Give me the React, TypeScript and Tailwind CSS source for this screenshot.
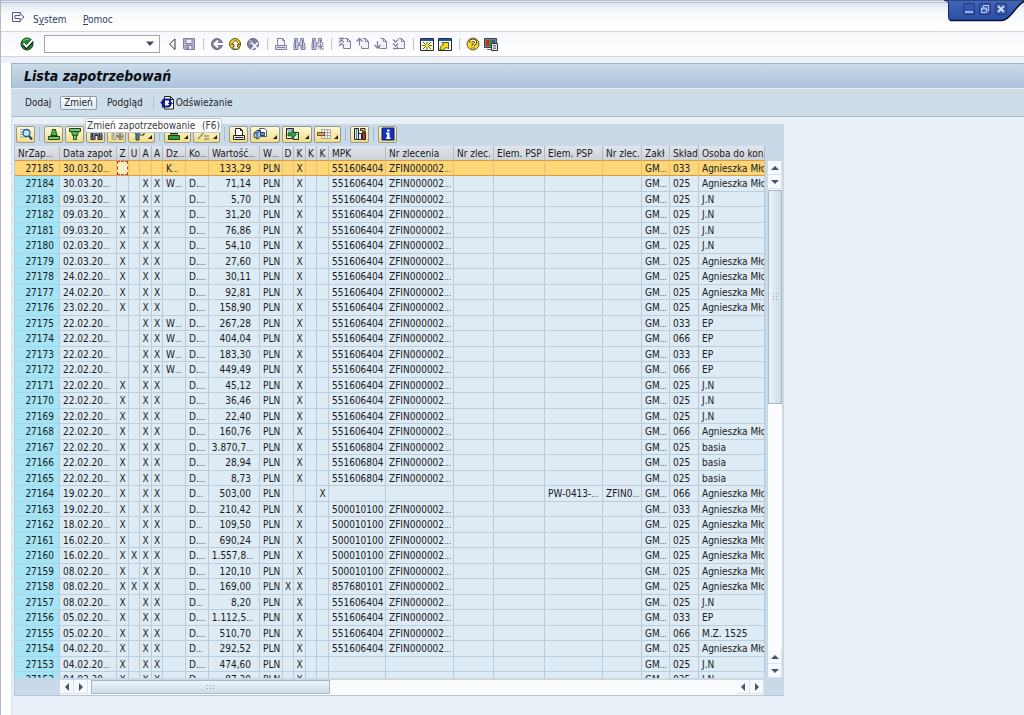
import type { ReactNode } from "react";

type Column = { label: string; width: string; cut?: boolean };

const columns: Column[] = [
  { label: "NrZap", width: "w-[45px]", cut: true },
  { label: "Data zapot", width: "w-[57px]" },
  { label: "Z", width: "w-[12px]" },
  { label: "U", width: "w-[11px]" },
  { label: "A", width: "w-[12px]" },
  { label: "A", width: "w-[11px]" },
  { label: "Dz", width: "w-[23px]", cut: true },
  { label: "Ko", width: "w-[23px]", cut: true },
  { label: "Wartość", width: "w-[51px]", cut: true },
  { label: "W", width: "w-[23px]", cut: true },
  { label: "D", width: "w-[11px]" },
  { label: "K", width: "w-[12px]" },
  { label: "K", width: "w-[11px]" },
  { label: "K", width: "w-[12px]" },
  { label: "MPK", width: "w-[57px]" },
  { label: "Nr zlecenia", width: "w-[68px]" },
  { label: "Nr zlec.", width: "w-[40px]" },
  { label: "Elem. PSP", width: "w-[51px]" },
  { label: "Elem. PSP", width: "w-[58px]" },
  { label: "Nr zlec.", width: "w-[39px]" },
  { label: "Zakł", width: "w-[28px]" },
  { label: "Skład", width: "w-[29px]" },
  { label: "Osoba do kon", width: "w-[66px]" },
];

const AM = "Agnieszka Mło";

// nr, date, Z U A A flags, Dz, Ko, value, D K K K flags, MPK, warehouse, person
// a trailing "~" marks a value that is cut off in its column
const records: string[][] = [
  ["27185", "30.03.20~", "----", "K~", "", "133,29", "-X--", "551606404", "033", AM],
  ["27184", "30.03.20~", "--XX", "W~", "D.~", "71,14", "-X--", "551606404", "025", AM],
  ["27183", "09.03.20~", "X-XX", "", "D.~", "5,70", "-X--", "551606404", "025", "J.N"],
  ["27182", "09.03.20~", "X-XX", "", "D.~", "31,20", "-X--", "551606404", "025", "J.N"],
  ["27181", "09.03.20~", "X-XX", "", "D.~", "76,86", "-X--", "551606404", "025", "J.N"],
  ["27180", "02.03.20~", "X-XX", "", "D.~", "54,10", "-X--", "551606404", "025", "J.N"],
  ["27179", "02.03.20~", "X-XX", "", "D.~", "27,60", "-X--", "551606404", "025", AM],
  ["27178", "24.02.20~", "X-XX", "", "D.~", "30,11", "-X--", "551606404", "025", AM],
  ["27177", "24.02.20~", "X-XX", "", "D.~", "92,81", "-X--", "551606404", "025", AM],
  ["27176", "23.02.20~", "X-XX", "", "D.~", "158,90", "-X--", "551606404", "025", AM],
  ["27175", "22.02.20~", "--XX", "W~", "D.~", "267,28", "-X--", "551606404", "033", "EP"],
  ["27174", "22.02.20~", "--XX", "W~", "D.~", "404,04", "-X--", "551606404", "066", "EP"],
  ["27173", "22.02.20~", "--XX", "W~", "D.~", "183,30", "-X--", "551606404", "033", "EP"],
  ["27172", "22.02.20~", "--XX", "W~", "D.~", "449,49", "-X--", "551606404", "066", "EP"],
  ["27171", "22.02.20~", "X-XX", "", "D.~", "45,12", "-X--", "551606404", "025", "J.N"],
  ["27170", "22.02.20~", "X-XX", "", "D.~", "36,46", "-X--", "551606404", "025", "J.N"],
  ["27169", "22.02.20~", "X-XX", "", "D.~", "22,40", "-X--", "551606404", "025", "J.N"],
  ["27168", "22.02.20~", "X-XX", "", "D.~", "160,76", "-X--", "551606404", "066", AM],
  ["27167", "22.02.20~", "X-XX", "", "D.~", "3.870,7~", "-X--", "551606804", "025", "basia"],
  ["27166", "22.02.20~", "X-XX", "", "D.~", "28,94", "-X--", "551606804", "025", "basia"],
  ["27165", "22.02.20~", "X-XX", "", "D.~", "8,73", "-X--", "551606804", "025", "basia"],
  ["27164", "19.02.20~", "X-XX", "", "D~", "503,00", "---X", "", "066", AM],
  ["27163", "19.02.20~", "X-XX", "", "D.~", "210,42", "-X--", "500010100", "033", AM],
  ["27162", "18.02.20~", "X-XX", "", "D~", "109,50", "-X--", "500010100", "025", AM],
  ["27161", "16.02.20~", "X-XX", "", "D.~", "690,24", "-X--", "500010100", "025", AM],
  ["27160", "16.02.20~", "XXXX", "", "D.~", "1.557,8~", "-X--", "500010100", "025", AM],
  ["27159", "08.02.20~", "X-XX", "", "D.~", "120,10", "-X--", "500010100", "025", AM],
  ["27158", "08.02.20~", "XXXX", "", "D.~", "169,00", "XX--", "857680101", "025", AM],
  ["27157", "08.02.20~", "X-XX", "", "D~", "8,20", "-X--", "551606404", "025", "J.N"],
  ["27156", "05.02.20~", "X-XX", "", "D.~", "1.112,5~", "-X--", "551606404", "033", "EP"],
  ["27155", "05.02.20~", "X-XX", "", "D.~", "510,70", "-X--", "551606404", "066", "M.Z. 1525"],
  ["27154", "04.02.20~", "X-XX", "", "D~", "292,52", "-X--", "551606404", "025", AM],
  ["27153", "04.02.20~", "X-XX", "", "D.~", "474,60", "-X--", "", "025", "J.N"],
  ["27152", "04.02.20~", "X-XX", "", "D~", "87,30", "-X--", "", "025", "J.N"],
];

function toCells(r: string[]): string[] {
  const flag = (s: string) => s.split("").map((c) => (c === "X" ? "X" : ""));
  const psp = r[0] === "27164";
  return [
    r[0], r[1], ...flag(r[2]), r[3], r[4], r[5], "PLN", ...flag(r[6]), r[7],
    r[7] ? "ZFIN000002~" : "", "", "", psp ? "PW-0413-~" : "", psp ? "ZFIN0~" : "",
    "GM~", r[8], r[9],
  ];
}

function CutText({ text }: { text: string }) {
  if (!text.endsWith("~")) return <>{text}</>;
  return (
    <>
      {text.slice(0, -1)}
      <span className="text-[8px] leading-none text-[#3c4656]">...</span>
    </>
  );
}

function Icon({ children, size = 14 }: { children: ReactNode; size?: number }) {
  return (
    <svg width={size} height={size} viewBox="0 0 14 14" fill="none" aria-hidden="true" className="shrink-0">
      {children}
    </svg>
  );
}

const GREY = "#7f7fa6";

/* Sheet with a folded corner and an arrow at its left, used for paging */
function PageIcon({ arrow }: { arrow: string }) {
  return (
    <Icon>
      <path d="M5.500 1.500h4l3 3v7h-7z" fill="#f1f1fa" stroke={GREY} />
      <path d="M9.500 1.500v3h3" stroke={GREY} />
      <path d="M0 0h6.500v9H0z" fill="#fbfcfe" />
      <path d={arrow} stroke={GREY} strokeWidth="1.300" />
    </Icon>
  );
}

function Binoculars({ color = GREY, fill = "#c4c4dc" }: { color?: string; fill?: string }) {
  return (
    <>
      <path d="M2.500 1.500h3v3l1 1h1l1-1v-3h3v3l1.500 3v5h-4v-4h-3v4h-4v-5l.5-3z" fill={fill} stroke={color} />
      <path d="M3.500 3v8M10.500 3v8M6 7h2" stroke={color} />
    </>
  );
}

function ToolButton({ label, children }: { label: string; children: ReactNode }) {
  return (
    <button type="button" aria-label={label} className="flex size-3.5 items-center justify-center">
      {children}
    </button>
  );
}

function ToolSeparator() {
  return <span className="mx-0.5 flex w-0.5 justify-center"><span className="h-3 w-px bg-[#bcc3dc]" /></span>;
}

function GridButton({ label, size = "w-[19px]", menu, children }: {
  label: string;
  size?: string;
  menu?: boolean;
  children: ReactNode;
}) {
  return (
    <button
      type="button"
      aria-label={label}
      className={`flex h-[17px] shrink-0 items-center rounded-[2px] border border-[#98978a] bg-gradient-to-b from-[#fffbd6] to-[#f2dc84] ${size} ${menu ? "justify-between pl-0.5 pr-0.5" : "justify-center"}`}
    >
      <Icon>{children}</Icon>
      {menu && (
        <svg width="4" height="14" viewBox="0 0 4 14" aria-hidden="true"><path d="M4 8v4H0z" fill="#222" /></svg>
      )}
    </button>
  );
}

function GridSeparator() {
  return <span className="mx-0.5 h-3.5 w-px shrink-0 bg-[#adbccb]" />;
}

function ScrollButton({ label, path }: { label: string; path: string }) {
  return (
    <button type="button" aria-label={label} className="flex size-3.5 shrink-0 items-center justify-center border-b border-r border-[#dbe4ec] bg-[#f7fafc]">
      <svg width="8" height="8" viewBox="0 0 8 8" aria-hidden="true"><path d={path} fill="#44546a" /></svg>
    </button>
  );
}

function MenuBar() {
  return (
    <nav className="flex h-7 items-center bg-gradient-to-b from-[#dfe5f0] via-[#fafbfd] via-40% to-white pl-2.5 text-[10px] text-[#2f3e63]">
      <svg width="14" height="12" viewBox="0 0 14 12" fill="none" aria-hidden="true">
        <path d="M9.500 2.500v-1h-8v9h8v-1" stroke="#4d587c" />
        <path d="M4 4.500h5v-2l4 3.500-4 3.500v-2H4z" fill="#fff" stroke="#4d587c" />
      </svg>
      <button type="button" className="ml-2 mt-1 w-[50px] text-left">S<u>y</u>stem</button>
      <button type="button" className="mt-1"><u>P</u>omoc</button>
    </nav>
  );
}

function StandardToolbar() {
  return (
    <div className="flex h-[26px] items-center gap-1 border-b border-t border-[#d3d6de] bg-gradient-to-b from-[#f7f8fc] to-white pb-px pl-[19px]">
      <ToolButton label="Enter">
        <Icon>
          <circle cx="7" cy="7" r="6" fill="#1f8a2c" stroke="#123f1c" />
          <path d="M3 4.500a5 5 0 0 1 6-2" stroke="#6bd06b" />
          <path d="M3.500 7l3 3 6-6.500" stroke="#111" strokeWidth="3.500" />
          <path d="M3.500 6.500l3 3 6-6.500" stroke="#fff" strokeWidth="2" />
        </Icon>
      </ToolButton>
      <div className="relative ml-1.5 w-[116px]">
        <input aria-label="Command" className="block h-[18px] w-full border border-[#a3a5ab] bg-white px-1 text-[10px] outline-none" />
        <button type="button" aria-label="Command history" className="absolute right-1.5 top-1.5">
          <svg width="8" height="5" viewBox="0 0 8 5" aria-hidden="true"><path d="M0 .5h8L4 5z" fill="#404666" /></svg>
        </button>
      </div>
      <ToolButton label="Collapse">
        <Icon><path d="M11 2v10.500L5.500 7.200z" fill="#fff" stroke="#333" /></Icon>
      </ToolButton>
      <ToolButton label="Save">
        <Icon>
          <path d="M1.500 1.500h11v11h-10l-1-1z" fill="#b4b4d0" stroke={GREY} />
          <path d="M4 2h6v4.500H4z" fill="#f2f2fa" stroke={GREY} />
          <path d="M4 12V8.500h6V12" fill="#e8e8f3" stroke={GREY} />
          <path d="M5 9.500h2V12H5z" fill={GREY} />
        </Icon>
      </ToolButton>
      <ToolSeparator />
      <ToolButton label="Back">
        <Icon>
          <circle cx="7" cy="7" r="5.500" fill={GREY} stroke="#66668e" />
          <path d="M13 7H5M8 3.500L4.500 7 8 10.500" stroke="#fff" strokeWidth="2" />
        </Icon>
      </ToolButton>
      <ToolButton label="Exit">
        <Icon>
          <circle cx="7" cy="7" r="5.500" fill="#f4d319" stroke="#5d5014" />
          <path d="M3.500 7.500L7.500 3l4 4.500h-2V10H11v2H5v-2h1V7.500z" fill="#fff" stroke="#3f3810" strokeWidth=".8" />
        </Icon>
      </ToolButton>
      <ToolButton label="Cancel">
        <Icon>
          <circle cx="7" cy="7" r="5.500" fill={GREY} stroke="#66668e" />
          <path d="M3 4h3M3 6.500h2" stroke="#c9c9df" />
          <path d="M5.500 5.500l6.500 7M12 5.500l-6.500 7" stroke="#fff" strokeWidth="1.800" />
        </Icon>
      </ToolButton>
      <ToolSeparator />
      <ToolButton label="Print">
        <Icon>
          <path d="M3.500 8.500v-7h5l2 2v5" fill="#f8f8fd" stroke={GREY} />
          <path d="M8.500 1.500v2h2" stroke={GREY} />
          <path d="M1.500 8.500h11v4h-11zM3 10.500h8" fill="#dedeec" stroke={GREY} />
        </Icon>
      </ToolButton>
      <ToolButton label="Find"><Icon><Binoculars /></Icon></ToolButton>
      <ToolButton label="Find next">
        <Icon>
          <Binoculars />
          <path d="M10.500 6v7M7 9.500h7" stroke="#fff" strokeWidth="3" />
          <path d="M10.500 6.500v6M7.500 9.500h6" stroke={GREY} strokeWidth="1.500" />
        </Icon>
      </ToolButton>
      <ToolSeparator />
      <ToolButton label="First page"><PageIcon arrow="M1 1.500h5M1 5.500L3.500 3 6 5.500M1 9l2.500-2.500L6 9" /></ToolButton>
      <ToolButton label="Previous page"><PageIcon arrow="M.5 4.500l3-3 3 3M3.500 2v6.500" /></ToolButton>
      <ToolButton label="Next page"><PageIcon arrow="M.5 8l3 3 3-3M3.500 4v6.500" /></ToolButton>
      <ToolButton label="Last page"><PageIcon arrow="M1 2.500L3.500 5 6 2.500M1 6.500L3.500 9 6 6.500M1 11.500h5" /></ToolButton>
      <ToolSeparator />
      <ToolButton label="New session">
        <Icon>
          <path d="M.5 1.500h13v12H.5z" fill="#f7f8e8" stroke="#252b35" />
          <path d="M1 2h12v2H1z" fill="#1c55ba" />
          <path d="M3 5l3 3M11 5L8 8M3 12l3-3M11 12L8 9M2 8.500h3M9 8.500h3M7 5v2M7 10v3" stroke="#66630b" />
          <path d="M5.500 8.500h3M7 7v3" stroke="#f3e411" strokeWidth="2" />
        </Icon>
      </ToolButton>
      <ToolButton label="Create shortcut">
        <Icon>
          <path d="M.5 1.500h13v12H.5z" fill="#f7f8f4" stroke="#252b35" />
          <path d="M1 2h12v2H1z" fill="#1c55ba" />
          <path d="M2 13c0-3 1-4.500 3.500-5.500L4 5.500h6.500V12L9 10.500c-2 .5-3 1-3.500 2.500z" fill="#f1dd12" stroke="#3b390e" strokeWidth=".8" />
        </Icon>
      </ToolButton>
      <ToolSeparator />
      <ToolButton label="Help">
        <Icon>
          <circle cx="7" cy="7" r="6" fill="#f6d725" stroke="#665b20" />
          <path d="M4.500 5.500C4.500 2.500 9.500 2.500 9.500 5.500 9.500 7.500 7 7 7 9M7 10.500v1.500" stroke="#403813" strokeWidth="3" />
          <path d="M4.500 5.500C4.500 2.500 9.500 2.500 9.500 5.500 9.500 7.500 7 7 7 9M7 10.500v1.500" stroke="#fff8bc" strokeWidth="1.300" />
        </Icon>
      </ToolButton>
      <ToolButton label="Customize layout">
        <Icon>
          <path d="M.5 1.500h12v9H.5z" fill="#777b83" stroke="#3e434e" />
          <path d="M2 3h3v6H2z" fill="#d32720" />
          <path d="M5 3h3v6H5z" fill="#1c9a35" />
          <path d="M8 3h3v6H8z" fill="#2b55bb" />
          <path d="M3 12.500h5" stroke="#62666e" />
          <path d="M7.500 6.500h6v7h-6z" fill="#e6e6eb" stroke="#34343d" />
          <path d="M9 8.500h3M9 10h3M9 11.500h3" stroke="#65656d" strokeWidth=".8" />
        </Icon>
      </ToolButton>
    </div>
  );
}

function ApplicationToolbar() {
  return (
    <div className="relative flex h-7 items-center border-b border-[#aebfcb] bg-[#cedde8] pl-3.5 text-[10px] text-[#20262e]">
      <button type="button" className="w-[35px] text-left">Dodaj</button>
      <button type="button" className="h-3.5 w-[37px] rounded-[2px] border border-[#8c9dad] bg-gradient-to-b from-white to-[#dfe8f0] leading-3">Zmień</button>
      <button type="button" className="ml-2.5">Podgląd</button>
      <span className="ml-2.5 h-3 w-px bg-[#b3c3d0]" />
      <button type="button" className="ml-1.5 flex items-center gap-0.5">
        <Icon>
          <path d="M4.500.5h6l3 3v9.500h-9z" fill="#fff" stroke="#222" />
          <path d="M10.500.5v3h3" stroke="#222" />
          <path d="M10 6V3.500H5.500Q2.500 3.500 2.500 6.500" stroke="#10178f" strokeWidth="2.200" />
          <path d="M3 8v2.500h4.500q3 0 3-3" stroke="#10178f" strokeWidth="2.200" />
          <path d="M0 6h5.500L2.500 9zM7.500 8h5.500L10.500 5z" fill="#10178f" />
        </Icon>
        Odświeżanie
      </button>
      <div role="tooltip" className="absolute left-[74px] top-[29px] z-10 flex h-[15px] w-[137px] items-center justify-between whitespace-nowrap rounded-[3px] border border-[#c3c8cf] bg-white px-px text-[10px] text-[#3c3c44]">
        <span>Zmień zapotrzebowanie</span>
        <span>(F6)</span>
      </div>
    </div>
  );
}

function GridToolbar() {
  return (
    <div className="flex h-[22px] items-center gap-0.5 pb-0.5 pl-px">
      <GridButton label="Szczegóły">
        <path d="M1 2.500h9M1 5h5M1 7.500h5M1 10h6" stroke="#7ea9d6" />
        <circle cx="7.500" cy="6" r="3.500" fill="#bfe4f7" stroke="#205a9b" strokeWidth="1.300" />
        <path d="M10 9l3 3.500" stroke="#1b3e72" strokeWidth="2" />
      </GridButton>
      <GridSeparator />
      <GridButton label="Sortuj rosnąco">
        <path d="M5 2.500h4M4.500 5.500h5M3.500 8.500h7" stroke="#222" strokeWidth="1.200" />
        <path d="M5.500 2.500h3l.5 3 1 3H4l1-3z" fill="#58b44b" stroke="#17551e" />
        <path d="M1.500 9.500h11v3h-11z" fill="#80c66b" stroke="#17451e" />
      </GridButton>
      <GridButton label="Sortuj malejąco">
        <path d="M1.500 1.500h11v3h-11z" fill="#80c66b" stroke="#17451e" />
        <path d="M3.500 4.500h7l-1 4h-5z" fill="#58b44b" stroke="#17551e" />
        <path d="M5.500 8.500h3v4h-3z" fill="#80c66b" stroke="#17551e" />
      </GridButton>
      <GridButton label="Szukaj"><Binoculars color="#252936" fill="#7881a0" /></GridButton>
      <GridButton label="Szukaj dalej">
        <Binoculars color="#a09982" fill="#dcd5b2" />
        <path d="M10 6v7M6.500 9.500h7" stroke="#8c856d" strokeWidth="2" />
      </GridButton>
      <GridButton label="Filtr" size="w-[27px]" menu>
        <path d="M1 2h11L8 7v6H5V7z" fill="#617ba7" stroke="#26364d" />
        <path d="M9 4h4v4H9" stroke="#333" />
      </GridButton>
      <GridSeparator />
      <GridButton label="Suma" size="w-[27px]" menu>
        <path d="M1.500 8.500h11v4h-11z" fill="#3d9636" stroke="#143f18" />
        <path d="M3 6.500h8" stroke="#143f18" strokeWidth="2" />
      </GridButton>
      <GridButton label="Suma częściowa" size="w-[27px]" menu>
        <path d="M2 12L11 2M2 4h4M8 9h5M8 12h5" stroke="#9a927b" strokeWidth="1.500" />
      </GridButton>
      <GridSeparator />
      <GridButton label="Drukuj">
        <path d="M3.500 8.500v-7h5l2 2v5" fill="#fff" stroke="#222" />
        <path d="M8.500 1.500v2h2" stroke="#222" />
        <path d="M1.500 8.500h11v4h-11zM3 10.500h8" fill="#eee" stroke="#222" />
      </GridButton>
      <GridButton label="Widoki" size="w-[30px]" menu>
        <path d="M6.500 1.500h5l2 2v6h-7z" fill="#fff" stroke="#555c6a" />
        <path d="M1 6l3-2.500h3.500v6L4.500 12 1 10z" fill="#a9c5e6" stroke="#2b4468" />
        <path d="M4 6v6M1 6h3l3.500-2.500" stroke="#2b4468" />
        <path d="M8 5.500h3.500v3H8" fill="#6f95c6" stroke="#2b4468" />
      </GridButton>
      <GridButton label="Eksport" size="w-[30px]" menu>
        <path d="M1.500 1.500h7v10h-7z" fill="#fff" stroke="#222" />
        <path d="M2 3h6M3 5h4" stroke="#3c74bd" />
        <path d="M8.500 5.500h5v7h-5z" fill="#d9e6d6" stroke="#222" />
        <path d="M3 6h4V3.500L11.500 7.500 7 11.500V9H3z" fill="#36a535" stroke="#164d1d" strokeWidth=".8" />
      </GridButton>
      <GridButton label="Układ" size="w-[27px]" menu>
        <path d="M4.500 2.500h9v9h-9zM4.500 5.500h9M4.500 8.500h9M7.500 2.500v9M10.500 2.500v9" fill="#f3f1e8" stroke="#aaa9a2" />
        <path d="M.5 5.500h7v3h-7z" fill="#d5a45e" stroke="#72502b" />
      </GridButton>
      <GridSeparator />
      <GridButton label="Wykres">
        <path d="M1.500 1.500h4v11h-4z" fill="#dde3ee" stroke="#222" />
        <path d="M3.500 2v10" stroke="#547fc8" />
        <path d="M5.500 6.500h3v6h-3z" fill="#f3f3e6" stroke="#222" />
        <path d="M9.500 5.500h3v7h-3z" fill="#c22d46" stroke="#222" />
        <path d="M7.500 1.500h4.500v3.500h-2v-1.500h-2.500z" fill="#f0da3a" stroke="#222" />
      </GridButton>
      <GridSeparator />
      <GridButton label="Informacje">
        <path d="M1 1h12v12H1z" fill="#1432c4" stroke="#0d1d74" />
        <path d="M6 2.500h2.500v2H6zM5 5.500h3.500v5h1v1.500H5v-1.500h1V7H5z" fill="#fff" />
      </GridButton>
    </div>
  );
}

function cellTone(row: number, col: number) {
  if (row === 0) return "border-b-[#d99a4a] border-r-[#e3bf72] bg-[#fdd777]";
  if (col === 0) return "border-b-[#a7d6e6] border-r-[#b5cbdc] bg-[#a5e4f4]";
  return "border-b-[#bccddb] border-r-[#b9cbda] bg-[#deeaf4]";
}

function cellAlign(text: string, col: number) {
  if (col === 0) return "pr-[5px] text-right";
  if (col === 8) return text.endsWith("~") ? "pr-1.5 text-right" : "pr-2 text-right";
  if ((col > 1 && col < 6) || (col > 9 && col < 14)) return "text-center";
  return "pl-[3px]";
}

function RequestTable() {
  return (
    <table className="w-[750px] table-fixed border-separate border-spacing-0 text-[10px] leading-[13px] text-[#161a22]">
      <colgroup>
        {columns.map((c, i) => <col key={i} className={c.width} />)}
      </colgroup>
      <thead>
        <tr className="h-[15px]">
          {columns.map((c, i) => (
            <th
              key={i}
              scope="col"
              className={`overflow-hidden whitespace-nowrap border-b border-r border-b-[#d99a4a] border-r-[#b3bbc5] bg-gradient-to-b from-[#e1e4ea] to-[#cdd3db] p-0 font-normal ${c.label.length === 1 && !c.cut ? "text-center" : "pl-[3px] text-left"}`}
            >
              <CutText text={c.cut ? c.label + "~" : c.label} />
            </th>
          ))}
        </tr>
      </thead>
      <tbody>
        {records.map((r, row) => (
          <tr key={r[0]} className="odd:h-[15px] even:h-4">
            {toCells(r).map((text, col) => (
              <td
                key={col}
                className={`overflow-hidden whitespace-nowrap border-b border-r p-0 ${cellTone(row, col)} ${cellAlign(text, col)}`}
              >
                {row === 0 && col === 2 ? (
                  <span className="block h-3.5 border border-dashed border-[#cf3a35] bg-[#fff0c0]" />
                ) : (
                  <CutText text={text} />
                )}
              </td>
            ))}
          </tr>
        ))}
      </tbody>
    </table>
  );
}

const UP = "M0 6h8L4 2z";
const DOWN = "M0 2h8L4 6z";
const LEFT = "M6 0v8L2 4z";
const RIGHT = "M2 0v8l4-4z";

function Grip({ vertical }: { vertical?: boolean }) {
  return (
    <svg width={vertical ? 5 : 8} height={vertical ? 8 : 5} viewBox={vertical ? "0 0 5 8" : "0 0 8 5"} aria-hidden="true">
      <path
        d={vertical ? "M0 .5h1M3 .5h1M0 3.500h1M3 3.500h1M0 6.500h1M3 6.500h1" : "M0 .5h1M3 .5h1M6 .5h1M0 3.500h1M3 3.500h1M6 3.500h1"}
        stroke="#8fa0b0"
      />
    </svg>
  );
}

function RequestGrid() {
  return (
    <section aria-label="Lista zapotrzebowań" className="w-[770px] border-b border-l border-[#b5c6d5] bg-[#c9d9e7]">
      <GridToolbar />
      <div className="flex h-[532px] overflow-hidden">
        <div className="shrink-0 overflow-hidden">
          <RequestTable />
        </div>
        <div className="ml-[3px] mt-[15px] flex w-3.5 flex-col bg-[#fbfcfe]">
          <ScrollButton label="W górę" path={UP} />
          <ScrollButton label="W dół" path={DOWN} />
          <div className="mt-px flex h-[214px] items-center justify-center border border-[#a9b8c6] bg-gradient-to-r from-[#edf4f9] to-[#ccdce8]">
            <Grip vertical />
          </div>
          <div className="grow" />
          <ScrollButton label="Poprzedni wiersz" path={UP} />
          <ScrollButton label="Następny wiersz" path={DOWN} />
        </div>
      </div>
      <div className="mr-5 mt-0.5 flex h-[15px] pl-[45px]">
        <div className="flex grow bg-[#fbfcfe]">
          <ScrollButton label="W lewo" path={LEFT} />
          <ScrollButton label="W prawo" path={RIGHT} />
          <div className="ml-[3px] flex h-3.5 w-[239px] items-center justify-center border border-[#a9b8c6] bg-gradient-to-b from-[#edf4f9] to-[#ccdce8]">
            <Grip />
          </div>
          <div className="grow" />
          <ScrollButton label="Poprzednia kolumna" path={LEFT} />
          <ScrollButton label="Następna kolumna" path={RIGHT} />
        </div>
      </div>
    </section>
  );
}

/* Minimise, restore and close on the blue tab in the corner */
function WindowControls() {
  const button = "flex size-3 items-center justify-center rounded-[2px] border border-[#223a7c] bg-[#3558ac]";
  return (
    <div className="absolute right-0 top-0 h-[22px] w-20">
      <svg width="80" height="22" viewBox="0 0 80 22" aria-hidden="true">
        <defs>
          <linearGradient id="tab" x1="0" y1="0" x2="0" y2="1">
            <stop offset="0" stopColor="#4466b4" />
            <stop offset="1" stopColor="#284fa6" />
          </linearGradient>
        </defs>
        <path d="M0 0h80v1.500C73 4 66 20.500 58 20.500H7q-2.500 0-2.500-3V3Q4 1 0 0z" fill="url(#tab)" stroke="#15265c" />
        <path d="M6 20.500h52C66 20.500 73 4 80 1.500" fill="none" stroke="#0c1230" strokeWidth="1.500" />
      </svg>
      <div className="absolute left-[19px] top-[3px] flex gap-1">
        <button type="button" aria-label="Minimize" className={button}>
          <svg width="8" height="8" viewBox="0 0 8 8" aria-hidden="true"><path d="M0 7h8" stroke="#b9cbf3" strokeWidth="1.500" /></svg>
        </button>
        <button type="button" aria-label="Restore" className={button}>
          <svg width="8" height="8" viewBox="0 0 8 8" fill="none" aria-hidden="true"><path d="M2.500 2.500v-2h5v5h-2M.5 3h5v4.500h-5zM.5 4h5" stroke="#b9cbf3" /></svg>
        </button>
        <button type="button" aria-label="Close" className={button}>
          <svg width="8" height="8" viewBox="0 0 8 8" aria-hidden="true"><path d="M1 1l6 6M7 1L1 7" stroke="#d3dffb" strokeWidth="1.800" /></svg>
        </button>
      </div>
    </div>
  );
}

export default function App() {
  return (
    <div className="relative flex min-h-screen flex-col overflow-hidden border-l border-[#b5b9c4] bg-white font-['DejaVu_Sans_Condensed','DejaVu_Sans',sans-serif]">
      <div className="h-[3px] border-y border-[#b5bfd4] bg-[#e6ebf5]" />
      <MenuBar />
      <StandardToolbar />
      <div className="h-1.5 bg-[#eff1f9]" />
      <main className="flex grow flex-col pl-2.5">
        <header className="flex h-[26px] items-center border-b border-l border-t border-b-[#e6eff6] border-l-[#a9bccd] border-t-[#9db2c8] bg-gradient-to-b from-[#cbdbe8] to-[#aac2da] pl-3">
          <h1 className="text-[14px] font-bold italic leading-5 text-[#0b0d12]">Lista zapotrzebowań</h1>
        </header>
        <ApplicationToolbar />
        <div className="grow border-l border-[#d6e0ea] bg-[#e7eff7] pb-5 pl-0.5 pt-[7px]">
          <RequestGrid />
        </div>
      </main>
      <WindowControls />
    </div>
  );
}
